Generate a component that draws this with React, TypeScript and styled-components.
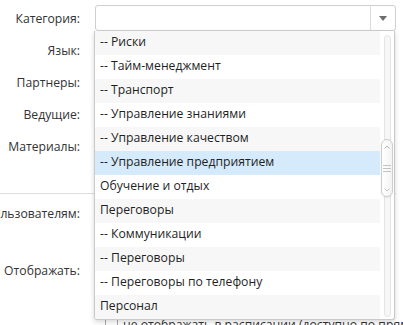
import React from "react";
import styled, { createGlobalStyle, css } from "styled-components";

const GlobalStyle = createGlobalStyle`
  html, body {
    margin: 0;
    padding: 0;
    background: #fff;
    overflow: hidden;
  }
  body {
    font-family: "Open Sans", "Liberation Sans", sans-serif;
    font-size: 12.2px;
    color: #333;
  }
`;

const Page = styled.div`
  width: 403px;
  height: 325px;
  overflow: hidden;
  padding: 5px 7px 0 0;
  box-sizing: border-box;
`;

const Section = styled.div`
  display: flex;
  flex-direction: column;
  gap: 6px;
`;

const Row = styled.div<{ top?: number }>`
  display: grid;
  grid-template-columns: 80px 1fr;
  column-gap: 15px;
  align-items: start;
  margin-top: ${({ top }) => top || 0}px;
`;

const Label = styled.div`
  display: flex;
  justify-content: flex-end;
  height: 26px;
  align-items: center;
  white-space: nowrap;
  color: #333;
`;

const Field = styled.div<{ tall?: boolean }>`
  height: ${({ tall }) => (tall ? 52 : 26)}px;
  background: #fff;
`;

const SelectWrap = styled.div`
  position: relative;
`;

const SelectBox = styled.div`
  height: 26px;
  box-sizing: border-box;
  border: 1px solid #cfcfcf;
  border-radius: 3px;
  display: flex;
  justify-content: flex-end;
  background: #fff;
`;

const ArrowButton = styled.div`
  width: 24px;
  border-left: 1px solid #dcdcdc;
  display: flex;
  align-items: center;
  justify-content: center;
  &::after {
    content: "";
    border-left: 4px solid transparent;
    border-right: 4px solid transparent;
    border-top: 5px solid #6e6e6e;
  }
`;

const Dropdown = styled.div`
  position: absolute;
  top: 26px;
  left: -1px;
  right: 1px;
  height: 289px;
  box-sizing: border-box;
  border: 1px solid #c9c9c9;
  border-top: none;
  border-radius: 0 0 3px 3px;
  background: #fff;
  box-shadow: 0 2px 5px rgba(0, 0, 0, 0.16);
  display: flex;
  z-index: 5;
`;

const List = styled.ul`
  list-style: none;
  margin: 0;
  padding: 0;
  flex: 1;
`;

const Item = styled.li<{ tone: "plain" | "gray" | "active" }>`
  height: 24px;
  line-height: 22px;
  padding-left: 5px;
  white-space: nowrap;
  color: #1f1f1f;
  ${({ tone }) =>
    tone === "gray" &&
    css`
      background: #f7f7f7;
    `}
  ${({ tone }) =>
    tone === "active" &&
    css`
      background: #d5eafb;
    `}
`;

const ScrollTrack = styled.div`
  width: 14px;
  position: relative;
  display: flex;
  justify-content: center;
  padding: 4px 0;
  box-sizing: border-box;
  &::before {
    content: "";
    width: 5px;
    height: 100%;
    border: 1px solid #e4e4e4;
    border-radius: 4px;
    background: #f7f7f7;
  }
`;

const Thumb = styled.div`
  position: absolute;
  top: 108px;
  left: 1px;
  width: 12px;
  height: 58px;
  box-sizing: border-box;
  border: 1px solid #cdcdcd;
  border-radius: 6px;
  background: linear-gradient(to right, #ffffff, #f3f3f3);
  box-shadow: 0 1px 2px rgba(0, 0, 0, 0.08);
  display: flex;
  flex-direction: column;
  align-items: center;
  justify-content: space-between;
  padding: 5px 0 4px;
`;

const Divider = styled.hr`
  border: none;
  border-top: 1px solid #dedede;
  margin: 0;
`;

const Options = styled.div`
  display: flex;
  flex-direction: column;
`;

const Option = styled.label`
  display: flex;
  align-items: center;
  gap: 5px;
  height: 27px;
  padding-left: 10px;
  white-space: nowrap;
  color: #333;
`;

const Check = styled.span`
  width: 13px;
  height: 13px;
  box-sizing: border-box;
  border: 1px solid #a9a9a9;
  border-radius: 2px;
  background: #fff;
  flex: none;
`;

const items: { text: string; tone: "plain" | "gray" | "active" }[] = [
  { text: "-- Риски", tone: "gray" },
  { text: "-- Тайм-менеджмент", tone: "plain" },
  { text: "-- Транспорт", tone: "gray" },
  { text: "-- Управление знаниями", tone: "plain" },
  { text: "-- Управление качеством", tone: "gray" },
  { text: "-- Управление предприятием", tone: "active" },
  { text: "Обучение и отдых", tone: "plain" },
  { text: "Переговоры", tone: "gray" },
  { text: "-- Коммуникации", tone: "plain" },
  { text: "-- Переговоры", tone: "gray" },
  { text: "-- Переговоры по телефону", tone: "plain" },
  { text: "Персонал", tone: "gray" },
];

const ThumbGrip = () => (
  <>
    <svg width="6" height="4" viewBox="0 0 6 4">
      <path d="M0.5 3.5 L3 1 L5.5 3.5" fill="none" stroke="#b5b5b5" strokeWidth="1" />
    </svg>
    <svg width="8" height="7" viewBox="0 0 8 7">
      <path d="M0 0.5 H8 M0 3.5 H8 M0 6.5 H8" stroke="#c2c2c2" strokeWidth="1" />
    </svg>
    <svg width="6" height="4" viewBox="0 0 6 4">
      <path d="M0.5 0.5 L3 3 L5.5 0.5" fill="none" stroke="#c5c5c5" strokeWidth="1" />
    </svg>
  </>
);

export default function App() {
  return (
    <Page>
      <GlobalStyle />
      <Section>
        <Row>
          <Label>Категория:</Label>
          <SelectWrap>
            <SelectBox>
              <ArrowButton />
            </SelectBox>
            <Dropdown>
              <List>
                {items.map((it) => (
                  <Item key={it.text} tone={it.tone}>
                    {it.text}
                  </Item>
                ))}
              </List>
              <ScrollTrack>
                <Thumb>
                  <ThumbGrip />
                </Thumb>
              </ScrollTrack>
            </Dropdown>
          </SelectWrap>
        </Row>
        <Row>
          <Label>Язык:</Label>
          <Field />
        </Row>
        <Row>
          <Label>Партнеры:</Label>
          <Field />
        </Row>
        <Row>
          <Label>Ведущие:</Label>
          <Field />
        </Row>
        <Row>
          <Label>Материалы:</Label>
          <Field tall />
        </Row>
      </Section>
      <Row top={8}>
        <div />
      </Row>
      <Divider />
      <Section>
        <Row top={6}>
          <Label>Доступно пользователям:</Label>
          <Field tall />
        </Row>
        <Row top={-1}>
          <Label>Отображать:</Label>
          <Options>
            <Option>
              <Check />в расписании
            </Option>
            <Option>
              <Check />в каталоге
            </Option>
            <Option>
              <Check />
              не отображать в расписании (доступно по прямой ссылке)
            </Option>
          </Options>
        </Row>
      </Section>
    </Page>
  );
}
